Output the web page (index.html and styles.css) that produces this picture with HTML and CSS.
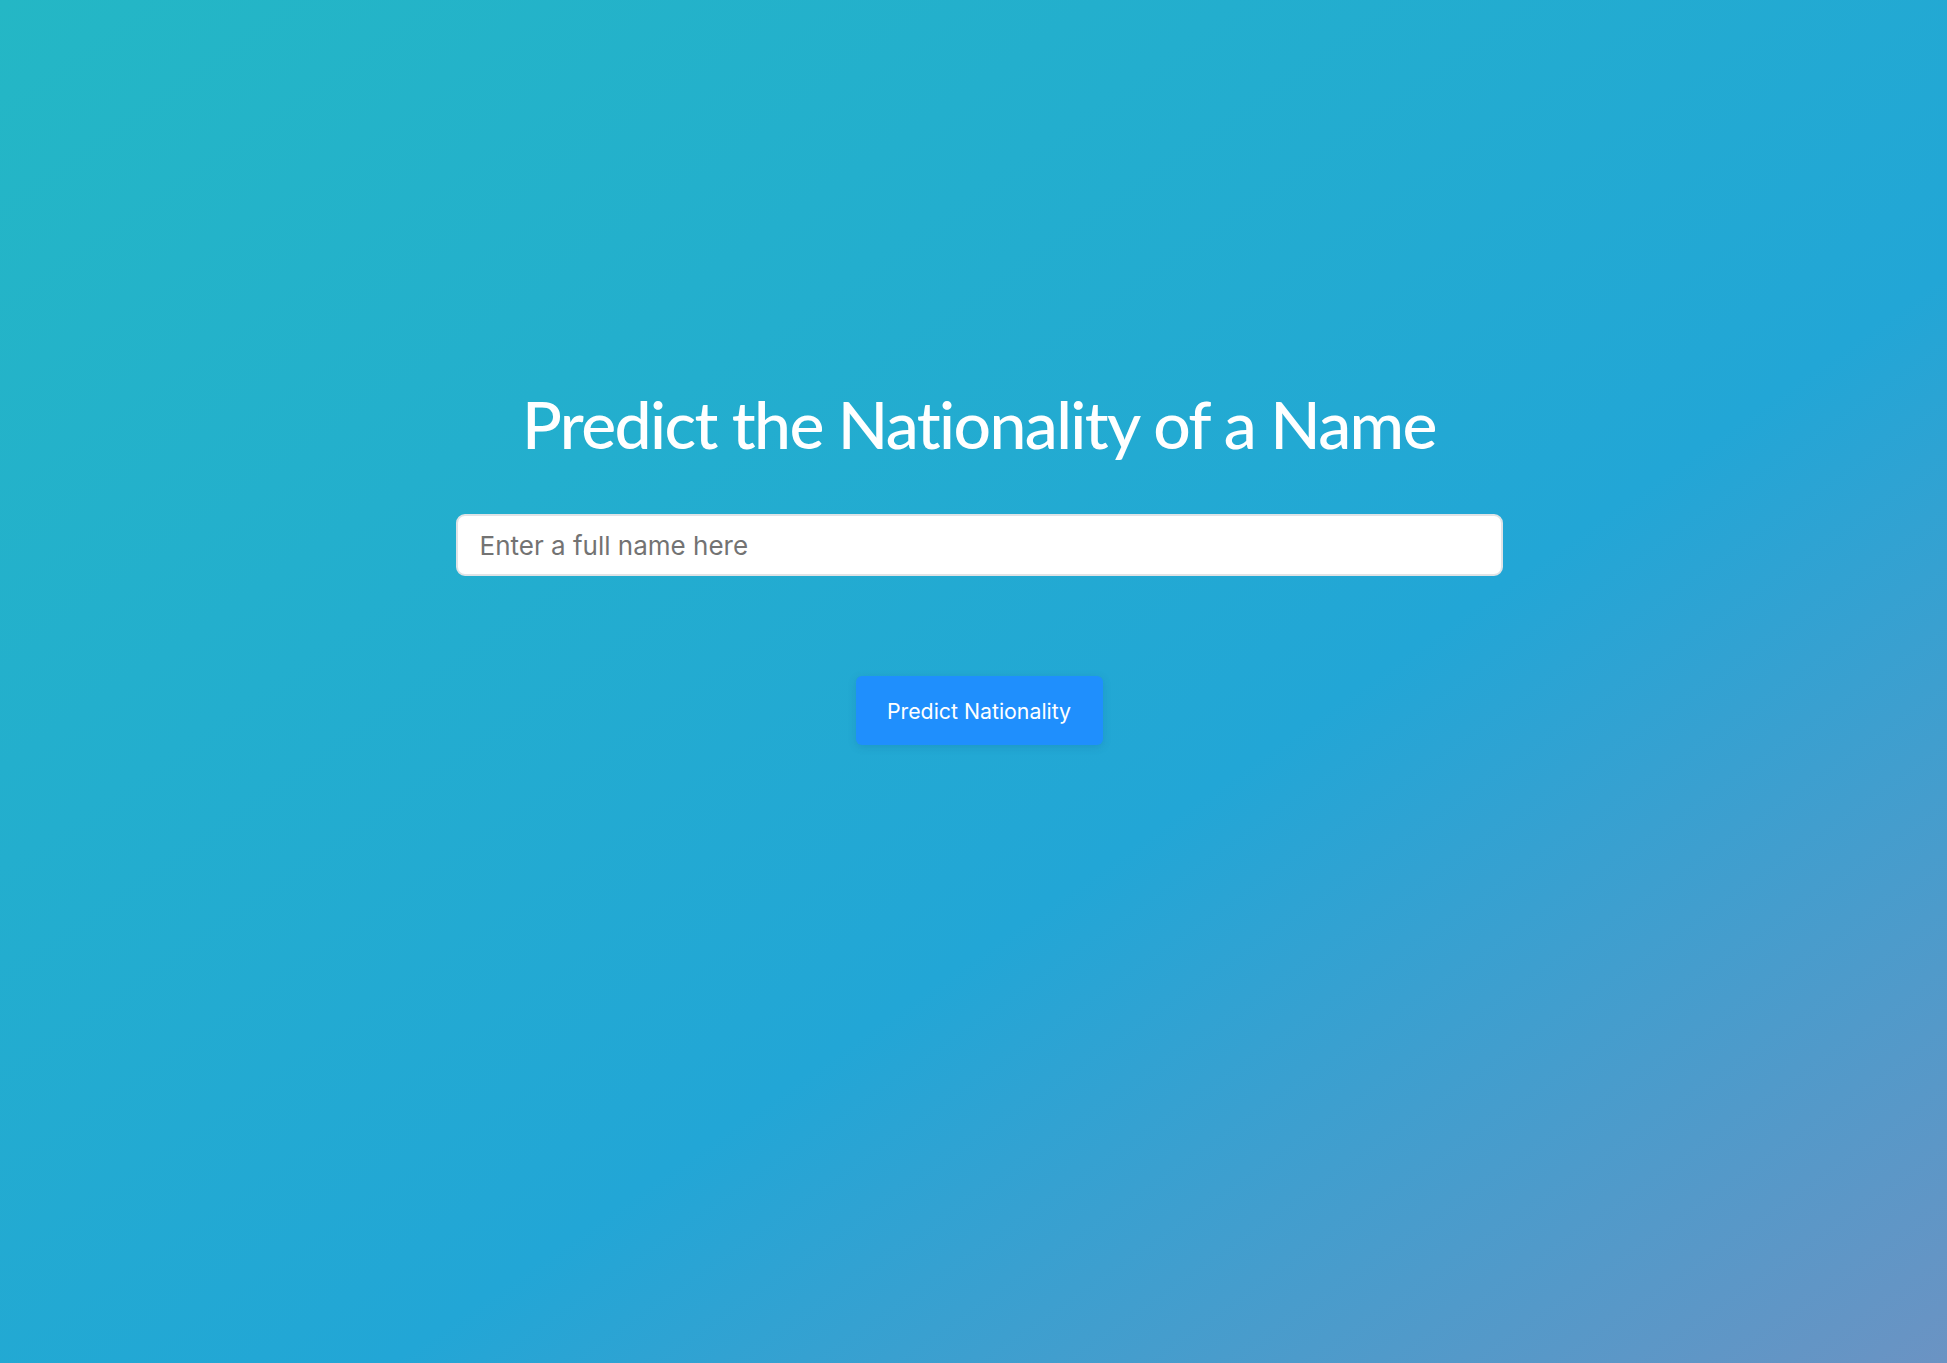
FILE: index.html
```html
<!DOCTYPE html>
<html lang="en">
<head>
<meta charset="utf-8">
<title>Predict the Nationality of a Name</title>
<link rel="stylesheet" href="styles.css">
</head>
<body>
<main class="page">
  <h1 class="title">Predict the Nationality of a Name</h1>
  <form class="form" onsubmit="return false;">
    <input class="name-input" type="text" placeholder="Enter a full name here">
    <button class="predict-btn" type="submit">Predict Nationality</button>
  </form>
</main>
</body>
</html>
```

FILE: styles.css
```css
html, body {
  margin: 0;
  padding: 0;
  height: 100%;
}
body {
  background: linear-gradient(to bottom right, #24b7c5 0%, #22a6d6 60%, #6b93c3 100%);
  font-family: Inter, "Liberation Sans", Arial, sans-serif;
}
.page {
  min-height: 100vh;
  display: flex;
  flex-direction: column;
  align-items: center;
  box-sizing: border-box;
  padding-top: 379px;
  padding-left: 11px;
}
.title {
  margin: 0;
  font-family: Lato, "Open Sans", sans-serif;
  font-weight: 500;
  font-size: 66px;
  line-height: 90px;
  color: #ffffff;
  letter-spacing: -1.6px;
}
.form {
  display: flex;
  flex-direction: column;
  align-items: center;
  margin-top: 45px;
}
.name-input {
  box-sizing: border-box;
  width: 1047px;
  height: 62px;
  padding: 0 22px;
  border: 2px solid #dfe3e6;
  border-radius: 9px;
  background: #ffffff;
  font-family: Inter, "Liberation Sans", Arial, sans-serif;
  font-size: 26px;
  color: #333;
  outline: none;
}
.name-input::placeholder {
  color: #737373;
}
.predict-btn {
  margin-top: 100px;
  width: 247px;
  height: 69px;
  border: none;
  border-radius: 6px;
  background: #1f8ffd;
  color: #ffffff;
  font-family: Inter, "Liberation Sans", Arial, sans-serif;
  font-size: 21.3px;
  box-shadow: 0 2px 8px rgba(0, 60, 120, 0.15);
  cursor: pointer;
}
```
